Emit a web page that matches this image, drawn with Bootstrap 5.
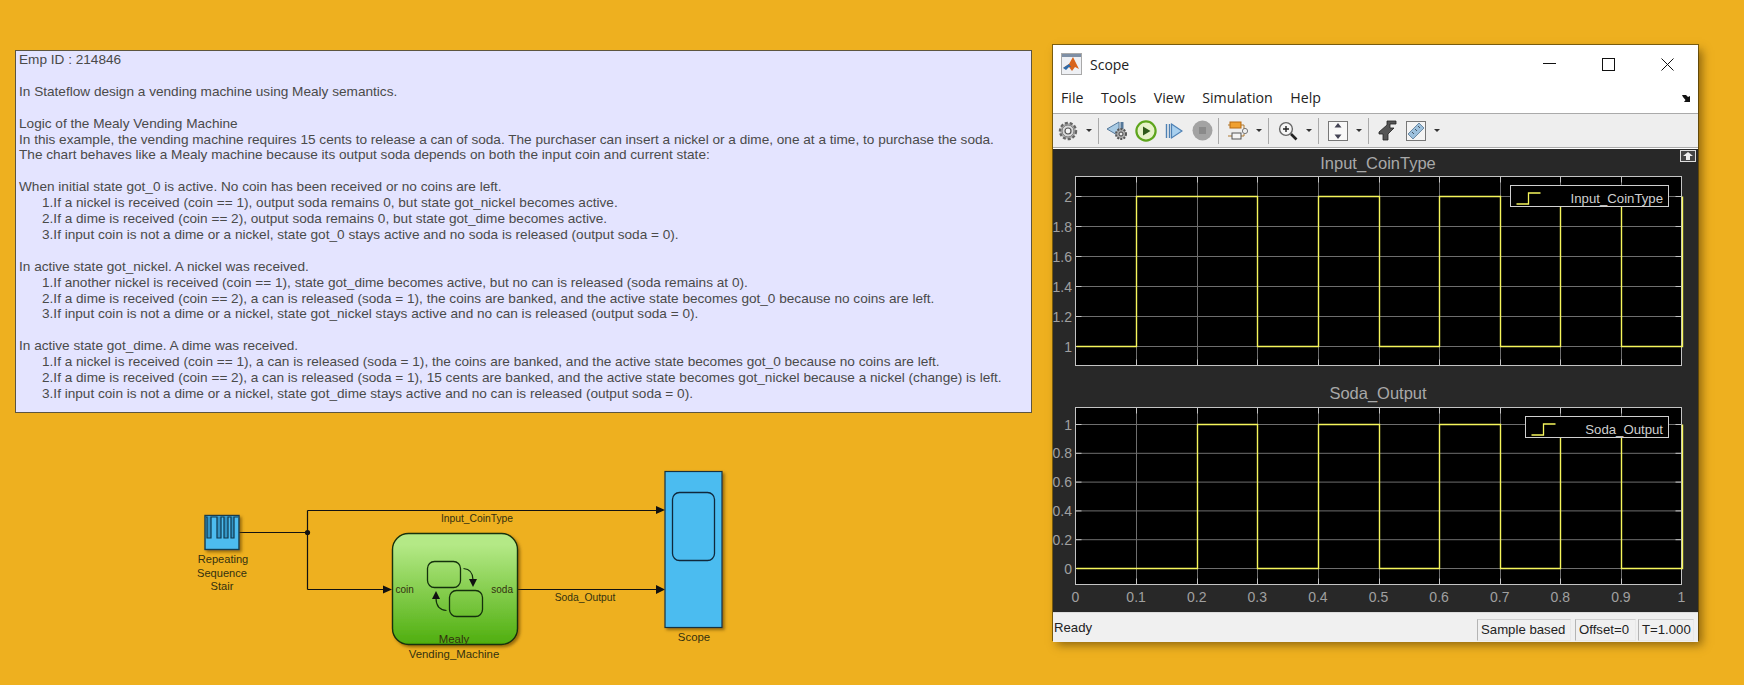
<!DOCTYPE html>
<html lang="en">

<head>
  <meta charset="UTF-8">
  <title>Mealy Vending Machine</title>
  <meta name="viewport" content="width=device-width, initial-scale=1">
  <link href="https://cdn.jsdelivr.net/npm/bootstrap@5.3.0/dist/css/bootstrap.min.css" rel="stylesheet">
  <style>
    html, body { height: 685px; overflow: hidden; }
    body { background: #eeb01f; font-family: "Liberation Sans", Arial, sans-serif; }
    .page-wrap { padding-top: 45px; }
    .left-col { width: 1017px; margin-left: 15px; margin-top: 5px; }

    /* annotation box */
    .note-box { height: 363px; background: #e4e4ff; border: 1px solid #5c5540; padding: 1px 3px; color: #4a4a4a; font-size: 13.62px; line-height: 15.9px; white-space: nowrap; }
    .note-box p { margin: 0 0 15.9px; }
    .note-step { display: block; padding-left: 23px; }

    /* simulink diagram */
    .diagram { display: block; width: 570px; height: 235px; margin: 37px 0 0 155px; font-size: 11.4px; fill: #33300f; }
    .port-label { font-size: 10px; }
    .signal-label { font-size: 10.3px; }
    .stair-label { font-size: 11.1px; }

    /* scope window */
    .scope-win { width: 645px; height: 595px; margin-left: 21px; background: #fff; box-shadow: 4px 5px 9px rgba(60, 40, 0, .55), 0 0 0 1px rgba(90, 70, 10, .75); }
    .win-title { height: 38px; padding-left: 8px; font-family: "Open Sans", sans-serif; font-size: 14px; color: #222; }
    .win-btns { margin-left: auto; padding-right: 24px; gap: 46px; }
    .win-menu { height: 31px; padding-left: 8px; gap: 17.5px; font-family: "Open Sans", sans-serif; font-size: 14.2px; color: #222; border-bottom: 1px solid #aaa; }
    .undock-mark { margin-left: auto; margin-right: 6px; }
    .tool-bar { height: 34px; padding-left: 1px; background: #eee; border-bottom: 1px solid #aaa; }
    .tool-slot { width: 28px; height: 26px; }
    .tool-caret { width: 14px; height: 26px; }
    .tool-caret::after { content: ""; border-left: 3px solid transparent; border-right: 3px solid transparent; border-top: 3px solid #333; }
    .tool-sep { width: 1px; height: 26px; margin: 0 5px 0 2px; background: #aaa; }
    .plot-area { height: 463px; margin-top: 1px; background: #282828; position: relative; }
    .plot-title { height: 27px; line-height: 28px; text-align: center; color: #a8a8a8; font-size: 16.5px; padding-left: 5px; }
    .plot-title.second { height: 42px; line-height: 56px; }
    .axes-svg { display: block; width: 645px; overflow: visible; font-size: 14px; }
    .undock-btn { position: absolute; top: 1px; right: 2px; width: 16px; height: 12px; background: #444; border: 1px solid #ddd; }
    .status-bar { height: 30px; background: #f0f0f0; font-size: 13.2px; color: #222; padding: 0 4px 0 1px; border-top: 1px solid #ddd; }
    .status-cell { height: 22px; line-height: 20px; padding-left: 3px; margin-top: 5px; border-left: 1px solid #b4b4b4; border-top: 1px solid #d0d0d0; border-bottom: 1px solid #e8e8e8; border-right: 1px solid #e8e8e8; }
    .cell-sample { width: 94px; margin-left: auto; }
    .cell-offset { width: 61px; margin-left: 4px; }
    .cell-time { width: 56px; margin-left: 2px; }
  </style>
</head>

<body>
  <div class="page-wrap d-flex align-items-start">

    <div class="left-col">
      <!-- Annotation -->
      <div class="note-box">
        <p>Emp ID : 214846</p>
        <p>In Stateflow design a vending machine using Mealy semantics.</p>
        <p>Logic of the Mealy Vending Machine<br>
          In this example, the vending machine requires 15 cents to release a can of soda. The purchaser can insert a nickel or a dime, one at a time, to purchase the soda.<br>
          The chart behaves like a Mealy machine because its output soda depends on both the input coin and current state:</p>
        <p>When initial state got_0 is active. No coin has been received or no coins are left.
          <span class="note-step">1.If a nickel is received (coin == 1), output soda remains 0, but state got_nickel becomes active.</span>
          <span class="note-step">2.If a dime is received (coin == 2), output soda remains 0, but state got_dime becomes active.</span>
          <span class="note-step">3.If input coin is not a dime or a nickel, state got_0 stays active and no soda is released (output soda = 0).</span></p>
        <p>In active state got_nickel. A nickel was received.
          <span class="note-step">1.If another nickel is received (coin == 1), state got_dime becomes active, but no can is released (soda remains at 0).</span>
          <span class="note-step">2.If a dime is received (coin == 2), a can is released (soda = 1), the coins are banked, and the active state becomes got_0 because no coins are left.</span>
          <span class="note-step">3.If input coin is not a dime or a nickel, state got_nickel stays active and no can is released (output soda = 0).</span></p>
        <p>In active state got_dime. A dime was received.
          <span class="note-step">1.If a nickel is received (coin == 1), a can is released (soda = 1), the coins are banked, and the active state becomes got_0 because no coins are left.</span>
          <span class="note-step">2.If a dime is received (coin == 2), a can is released (soda = 1), 15 cents are banked, and the active state becomes got_nickel because a nickel (change) is left.</span>
          <span class="note-step">3.If input coin is not a dime or a nickel, state got_dime stays active and no can is released (output soda = 0).</span></p>
      </div>

      <!-- Simulink model, viewBox is in page coordinates -->
      <svg class="diagram" viewBox="170 450 570 235">
        <defs>
          <linearGradient id="chartFill" x1="0" y1="0" x2="0" y2="1">
            <stop offset="0.1" stop-color="#b4e986" />
            <stop offset="1" stop-color="#4fae0e" />
          </linearGradient>
          <filter id="blockShadow" x="-10%" y="-10%" width="125%" height="125%">
            <feDropShadow dx="2" dy="2" stdDeviation="1.5" flood-color="#5a3c00" flood-opacity=".6" />
          </filter>
        </defs>

        <!-- signal lines -->
        <g fill="none" stroke="#111" stroke-width="1.2">
          <path d="M239 532.5H307.5M307.5 510.5V589.5M307.5 510.5H656M307.5 589.5H383M517 589.5H656" />
        </g>
        <circle cx="307.5" cy="532.5" r="2.6" fill="#111" />
        <g fill="#111">
          <path d="M383 585.5L392 589.5L383 593.5Z" />
          <path d="M656 506L665 510L656 514Z" />
          <path d="M656 585L665 589.5L656 594Z" />
        </g>
        <text class="signal-label" x="477" y="522" text-anchor="middle">Input_CoinType</text>
        <text class="signal-label" x="585" y="601" text-anchor="middle">Soda_Output</text>

        <!-- repeating sequence stair -->
        <rect x="205" y="515.5" width="34" height="34" fill="#4dbcef" stroke="#123c50" stroke-width="1.4" filter="url(#blockShadow)" />
        <path d="M206 517H207V538H211V517H217V538H221V517H224V538H228V517H231V538H234V517H238" fill="#3494c4" stroke="#10384e" stroke-width="1.2" />
        <text class="stair-label" x="223" y="563" text-anchor="middle">Repeating</text>
        <text class="stair-label" x="222" y="577" text-anchor="middle">Sequence</text>
        <text class="stair-label" x="222" y="590" text-anchor="middle">Stair</text>

        <!-- stateflow chart -->
        <rect x="392.5" y="533.5" width="125" height="111" rx="16" fill="url(#chartFill)" stroke="#17300a" stroke-width="1.4" filter="url(#blockShadow)" />
        <rect x="427.5" y="561.5" width="33" height="26" rx="7" fill="none" stroke="#14300c" stroke-width="1.3" />
        <rect x="449.5" y="590.5" width="33" height="26" rx="7" fill="none" stroke="#14300c" stroke-width="1.3" />
        <path d="M463.5 568.5C470 569 473 573 473 580" fill="none" stroke="#14300c" stroke-width="1.2" />
        <path d="M469 579L477 579L473 587Z" fill="#111" />
        <path d="M446.5 610.5C440 610 436 606 436 598" fill="none" stroke="#14300c" stroke-width="1.2" />
        <path d="M432 599L440 599L436 591Z" fill="#111" />
        <text class="port-label" x="395.5" y="593">coin</text>
        <text class="port-label" x="513" y="593" text-anchor="end">soda</text>
        <text x="454" y="643" text-anchor="middle">Mealy</text>
        <text x="454" y="658" text-anchor="middle">Vending_Machine</text>

        <!-- scope block -->
        <rect x="665" y="471.5" width="57" height="156" fill="#4cbcf0" stroke="#14323f" stroke-width="1.2" filter="url(#blockShadow)" />
        <rect x="672.5" y="492.5" width="42" height="68" rx="7" fill="none" stroke="#10283c" stroke-width="1.3" />
        <text x="694" y="641" text-anchor="middle">Scope</text>
      </svg>
    </div>

    <!-- Scope window -->
    <div class="scope-win">
      <div class="win-title d-flex align-items-center">
        <svg width="21" height="22" viewBox="0 0 21 22" class="me-2">
          <rect x="0.5" y="0.5" width="20" height="21" fill="#eef0f4" stroke="#a9a9a9" />
          <rect x="1" y="1" width="19" height="3" fill="#7e8fa5" />
          <path d="M2 15L8 11L12 4L18 16L14 14L11 18L8 14Z" fill="#d8641c" />
          <path d="M2 15L8 11L10 14L8 14L5 17Z" fill="#2f6aa8" />
        </svg>
        <span>Scope</span>
        <div class="win-btns d-flex align-items-center">
          <svg width="13" height="13" viewBox="0 0 13 13"><path d="M0 5.5H13" stroke="#111" /></svg>
          <svg width="13" height="13" viewBox="0 0 13 13"><rect x="0.5" y="0.5" width="12" height="12" fill="none" stroke="#111" /></svg>
          <svg width="13" height="13" viewBox="0 0 13 13"><path d="M0.5 0.5L12.5 12.5M12.5 0.5L0.5 12.5" stroke="#111" /></svg>
        </div>
      </div>
      <div class="win-menu d-flex align-items-center">
        <span>File</span><span>Tools</span><span>View</span><span>Simulation</span><span>Help</span>
        <svg class="undock-mark" width="10" height="9" viewBox="0 0 10 9"><path d="M0 1H4L6 3L8 2V8H2L3.5 6L1 3Z" fill="#111" /></svg>
      </div>

      <div class="tool-bar d-flex align-items-center">
        <!-- settings -->
        <div class="tool-slot d-flex align-items-center justify-content-center">
          <svg width="20" height="20" viewBox="0 0 20 20">
            <circle cx="10" cy="10" r="8" fill="#bbb" stroke="#666" stroke-width="2.4" stroke-dasharray="3 1.9" />
            <circle cx="10" cy="10" r="6" fill="#d8d8d8" stroke="#777" />
            <circle cx="10" cy="10" r="3" fill="#f4f4f4" stroke="#555" stroke-width="1.2" />
          </svg>
        </div>
        <div class="tool-caret d-flex align-items-center justify-content-center"></div>
        <div class="tool-sep"></div>
        <!-- step back -->
        <div class="tool-slot d-flex align-items-center justify-content-center">
          <svg width="24" height="22" viewBox="0 0 24 22">
            <path d="M1 9L13 2V16Z" fill="#a9cbe4" stroke="#55789a" />
            <path d="M16 2V9" stroke="#55789a" stroke-width="3" />
            <circle cx="15" cy="14" r="5" fill="#aaa" stroke="#555" stroke-width="2" stroke-dasharray="2 1.2" />
            <circle cx="15" cy="14" r="2" fill="#eee" stroke="#444" />
          </svg>
        </div>
        <!-- run -->
        <div class="tool-slot d-flex align-items-center justify-content-center">
          <svg width="22" height="22" viewBox="0 0 22 22">
            <circle cx="11" cy="11" r="9.6" fill="#e6f2c8" stroke="#5da51c" stroke-width="2.2" />
            <path d="M8 6.5L15.5 11L8 15.5Z" fill="#2f5a1a" />
          </svg>
        </div>
        <!-- step forward -->
        <div class="tool-slot d-flex align-items-center justify-content-center">
          <svg width="18" height="18" viewBox="0 0 18 18">
            <path d="M1.5 2V16M4.5 2V16" stroke="#4e81b4" stroke-width="1.4" fill="none" />
            <path d="M6.5 2L17 9L6.5 16Z" fill="#a9d0ee" stroke="#4e81b4" stroke-width="1.2" />
          </svg>
        </div>
        <!-- stop -->
        <div class="tool-slot d-flex align-items-center justify-content-center">
          <svg width="21" height="21" viewBox="0 0 21 21">
            <circle cx="10.5" cy="10.5" r="10" fill="#a3a3a3" />
            <rect x="7" y="7" width="7" height="7" fill="#8a8a8a" />
          </svg>
        </div>
        <div class="tool-sep"></div>
        <!-- signal hierarchy -->
        <div class="tool-slot d-flex align-items-center justify-content-center">
          <svg width="22" height="22" viewBox="0 0 22 22" fill="none">
            <rect x="3" y="2" width="11" height="6" fill="#f0a030" stroke="#b86a10" />
            <path d="M1 5H3M14 5H17V9M1 16H5M14 16H17V14" stroke="#b07a30" />
            <circle cx="18" cy="11" r="2.6" fill="#eee" stroke="#777" />
            <rect x="5" y="13" width="9" height="6" fill="#f4f4f4" stroke="#555" />
          </svg>
        </div>
        <div class="tool-caret d-flex align-items-center justify-content-center"></div>
        <div class="tool-sep"></div>
        <!-- zoom -->
        <div class="tool-slot d-flex align-items-center justify-content-center">
          <svg width="20" height="20" viewBox="0 0 20 20" fill="none">
            <circle cx="8" cy="8" r="6.4" fill="#f6f6f6" stroke="#666" stroke-width="1.4" />
            <path d="M5 8H11M8 5V11" stroke="#222" stroke-width="1.4" />
            <path d="M13 13L18.5 18.5" stroke="#222" stroke-width="2.6" />
          </svg>
        </div>
        <div class="tool-caret d-flex align-items-center justify-content-center"></div>
        <div class="tool-sep"></div>
        <!-- scale axes -->
        <div class="tool-slot d-flex align-items-center justify-content-center">
          <svg width="20" height="20" viewBox="0 0 20 20">
            <rect x="0.5" y="0.5" width="19" height="19" fill="#f8f8f8" stroke="#777" />
            <path d="M10 2L13.5 6.5H6.5ZM10 18L13.5 13.5H6.5Z" fill="#445" />
          </svg>
        </div>
        <div class="tool-caret d-flex align-items-center justify-content-center"></div>
        <div class="tool-sep"></div>
        <!-- trigger -->
        <div class="tool-slot d-flex align-items-center justify-content-center">
          <svg width="20" height="22" viewBox="0 0 20 22">
            <path d="M1 12L9 5V1H18V4H12V8H16L10 14V20H5V14H1Z" fill="#555" stroke="#222" stroke-width=".8" />
          </svg>
        </div>
        <!-- measurements -->
        <div class="tool-slot d-flex align-items-center justify-content-center">
          <svg width="20" height="20" viewBox="0 0 20 20">
            <rect x="0.5" y="0.5" width="19" height="19" fill="#f4f4f4" stroke="#777" />
            <path d="M2 13L13 2L18 7L7 18Z" fill="#9cc0dc" stroke="#6c8aa4" />
            <path d="M6 11L8 13M9 8L11 10M12 5L14 7" stroke="#456" />
          </svg>
        </div>
        <div class="tool-caret d-flex align-items-center justify-content-center"></div>
      </div>

      <div class="plot-area">
        <div class="undock-btn d-flex align-items-center justify-content-center">
          <svg width="10" height="8" viewBox="0 0 10 8"><path d="M5 0L10 4H7V8H3V4H0Z" fill="#eee" /></svg>
        </div>
        <div class="plot-title">Input_CoinType</div>
        <svg id="axes-input" class="axes-svg" height="189" viewBox="1053 175 645 189"></svg>
        <div class="plot-title second">Soda_Output</div>
        <svg id="axes-soda" class="axes-svg" height="204" viewBox="1053 406 645 204"></svg>
      </div>

      <div class="status-bar d-flex align-items-center">
        <span>Ready</span>
        <div class="status-cell cell-sample">Sample based</div>
        <div class="status-cell cell-offset">Offset=0</div>
        <div class="status-cell cell-time">T=1.000</div>
      </div>
    </div>
  </div>

  <script src="https://cdn.jsdelivr.net/npm/bootstrap@5.3.0/dist/js/bootstrap.bundle.min.js"></script>

  <script>
    const X0 = 1075.5, X1 = 1681.5;
    const xAt = t => X0 + (X1 - X0) * t;

    function drawAxes(id, opts) {
      const { top, bottom, yAt, yTicks, steps, legend, xLabels } = opts;
      let out = `<rect x="${X0}" y="${top}" width="${X1 - X0}" height="${bottom - top}" fill="#000"/>`;

      // grid and tick marks
      for (let i = 1; i < 10; i++) {
        const x = Math.round(xAt(i / 10)) + 0.5;
        out += `<path d="M${x} ${top}V${bottom}" stroke="#6e6e6e"/>`;
        out += `<path d="M${x} ${top}v6M${x} ${bottom}v-6" stroke="#c4c4c4"/>`;
      }
      yTicks.forEach(v => {
        const y = yAt(v);
        out += `<path d="M${X0} ${y}H${X1}" stroke="#6e6e6e"/>`;
        out += `<path d="M${X0} ${y}h6M${X1} ${y}h-6" stroke="#c4c4c4"/>`;
        out += `<text x="1072" y="${y + 5}" text-anchor="end" fill="#a0a0a0">${v}</text>`;
      });
      out += `<rect x="${X0}" y="${top}" width="${X1 - X0}" height="${bottom - top}" fill="none" stroke="#c4c4c4"/>`;

      // signal
      let d = '';
      steps.forEach(([t, v], i) => {
        d += `${i ? 'L' : 'M'}${Math.round(xAt(t)) + 0.5} ${yAt(v)}`;
      });
      out += `<path d="${d}" fill="none" stroke="#f6f65c" stroke-width="1.4"/>`;

      // legend
      const l = legend;
      out += `<rect x="${l.x}" y="${l.y}" width="${1668.5 - l.x}" height="${l.h}" fill="#000" stroke="#d0d0d0"/>`;
      out += `<path d="M${l.x + 6} ${l.y + 18.5}h12v-11h12" fill="none" stroke="#f6f65c" stroke-width="1.3"/>`;
      out += `<text x="1663" y="${l.y + 17}" text-anchor="end" font-size="13.2" fill="#cfcfcf">${l.text}</text>`;

      if (xLabels) {
        ['0', '0.1', '0.2', '0.3', '0.4', '0.5', '0.6', '0.7', '0.8', '0.9', '1'].forEach((s, i) => {
          out += `<text x="${xAt(i / 10)}" y="601" text-anchor="middle" fill="#a0a0a0">${s}</text>`;
        });
      }
      document.getElementById(id).innerHTML = out;
    }

    // square wave from a list of [start, value] segments
    function stepPoints(segs) {
      const pts = [];
      segs.forEach(([t, v], i) => {
        const end = i + 1 < segs.length ? segs[i + 1][0] : 1;
        pts.push([t, v], [end, v]);
      });
      return pts;
    }

    drawAxes('axes-input', {
      top: 175.5, bottom: 364.5,
      yAt: v => 345.5 - (v - 1) * 150,
      yTicks: [1, 1.2, 1.4, 1.6, 1.8, 2],
      steps: [...stepPoints([[0, 1], [0.1, 2], [0.3, 1], [0.4, 2], [0.5, 1], [0.6, 2], [0.7, 1], [0.8, 2], [0.9, 1]]), [1, 2]],
      legend: { x: 1510.5, y: 184.5, h: 21, text: 'Input_CoinType' }
    });

    drawAxes('axes-soda', {
      top: 406.5, bottom: 583.5, xLabels: true,
      yAt: v => 567.5 - v * 144,
      yTicks: [0, 0.2, 0.4, 0.6, 0.8, 1],
      steps: [...stepPoints([[0, 0], [0.2, 1], [0.3, 0], [0.4, 1], [0.5, 0], [0.6, 1], [0.7, 0], [0.8, 1], [0.9, 0]]), [1, 1]],
      legend: { x: 1525.5, y: 415.5, h: 21, text: 'Soda_Output' }
    });
  </script>
</body>

</html>
